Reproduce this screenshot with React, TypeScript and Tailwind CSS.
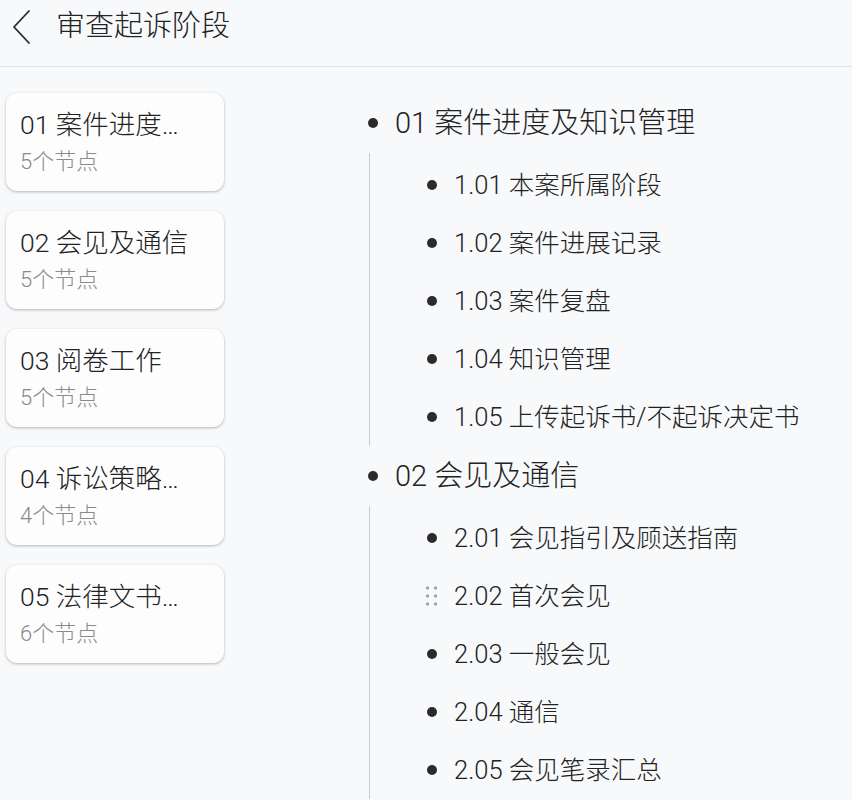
import React from "react";

interface Group {
  title: string;
  short: string;
  count: number;
  items: string[];
}

const groups: Group[] = [
  {
    title: "01 案件进度及知识管理",
    short: "01 案件进度及知识管理",
    count: 5,
    items: ["1.01 本案所属阶段", "1.02 案件进展记录", "1.03 案件复盘", "1.04 知识管理", "1.05 上传起诉书/不起诉决定书"],
  },
  {
    title: "02 会见及通信",
    short: "02 会见及通信",
    count: 5,
    items: ["2.01 会见指引及顾送指南", "2.02 首次会见", "2.03 一般会见", "2.04 通信", "2.05 会见笔录汇总"],
  },
  { title: "03 阅卷工作", short: "03 阅卷工作", count: 5, items: [] },
  { title: "04 诉讼策略", short: "04 诉讼策略及辩护意见", count: 4, items: [] },
  { title: "05 法律文书", short: "05 法律文书及其他材料", count: 6, items: [] },
];

const font = { fontFamily: 'Roboto, "Noto Sans CJK SC", sans-serif' };

function DragHandle() {
  return (
    <svg width="13" height="20" viewBox="0 0 13 20" className="shrink-0 -ml-[2px] -mr-[1px]">
      {[2, 10, 18].map((y) =>
        [2.5, 10.5].map((x) => <circle key={`${x}-${y}`} cx={x} cy={y} r="1.7" fill="#a3a3a3" />)
      )}
    </svg>
  );
}

export default function App() {
  const tree = groups.slice(0, 2);

  return (
    <div className="min-h-screen w-[852px] h-[800px] overflow-hidden bg-[#f8f9fb] text-[#222] font-light" style={font}>
      {/* Header */}
      <div className="h-[67px] border-b border-[#e2e3e7] flex items-start pt-[7px] pl-[10px]">
        <svg width="24" height="38" viewBox="0 0 24 38" className="mt-[1px]">
          <path d="M19 3 L4 19 L19 35" fill="none" stroke="#2a2a2a" strokeWidth="1.8" strokeLinecap="round" strokeLinejoin="round" />
        </svg>
        <h1 className="ml-[22px] text-[29px] leading-[38px] text-[#222] font-light">审查起诉阶段</h1>
      </div>

      <div className="flex">
        {/* Left cards */}
        <div className="w-[224px] shrink-0 pl-[6px] pt-[26px] flex flex-col gap-[20px]">
          {groups.map((g) => (
            <div
              key={g.short}
              className="h-[98px] rounded-[11px] bg-[#fdfdfe] shadow-[0_1px_3px_rgba(0,0,0,0.28)] pl-[14px] pr-[28px] pt-[15px]"
            >
              <div className="text-[26.5px] leading-[34px] whitespace-nowrap overflow-hidden text-ellipsis">{g.short}</div>
              <div className="text-[22px] leading-[30px] text-[#8a8a8a] mt-[5px]">{g.count}个节点</div>
            </div>
          ))}
        </div>

        {/* Right tree */}
        <div className="ml-[144px] pt-[26px]">
          {tree.map((g) => (
            <div key={g.title}>
              <div className="h-[60px] flex items-center">
                <span className="w-[10px] h-[10px] rounded-full bg-[#2b2b2b] shrink-0" />
                <span className="ml-[17px] text-[29px] leading-[36px] whitespace-nowrap">{g.title}</span>
              </div>
              <div className="ml-[1px] border-l-[1.5px] border-[#c9c9cc] pt-[3px]">
                {g.items.map((it) => (
                  <div key={it} className="h-[58px] flex items-center pl-[57px]">
                    {it.startsWith("2.02") ? (
                      <DragHandle />
                    ) : (
                      <span className="w-[10px] h-[10px] rounded-full bg-[#2b2b2b] shrink-0" />
                    )}
                    <span className="ml-[17px] text-[25.5px] leading-[34px] whitespace-nowrap">{it}</span>
                  </div>
                ))}
              </div>
            </div>
          ))}
        </div>
      </div>
    </div>
  );
}
